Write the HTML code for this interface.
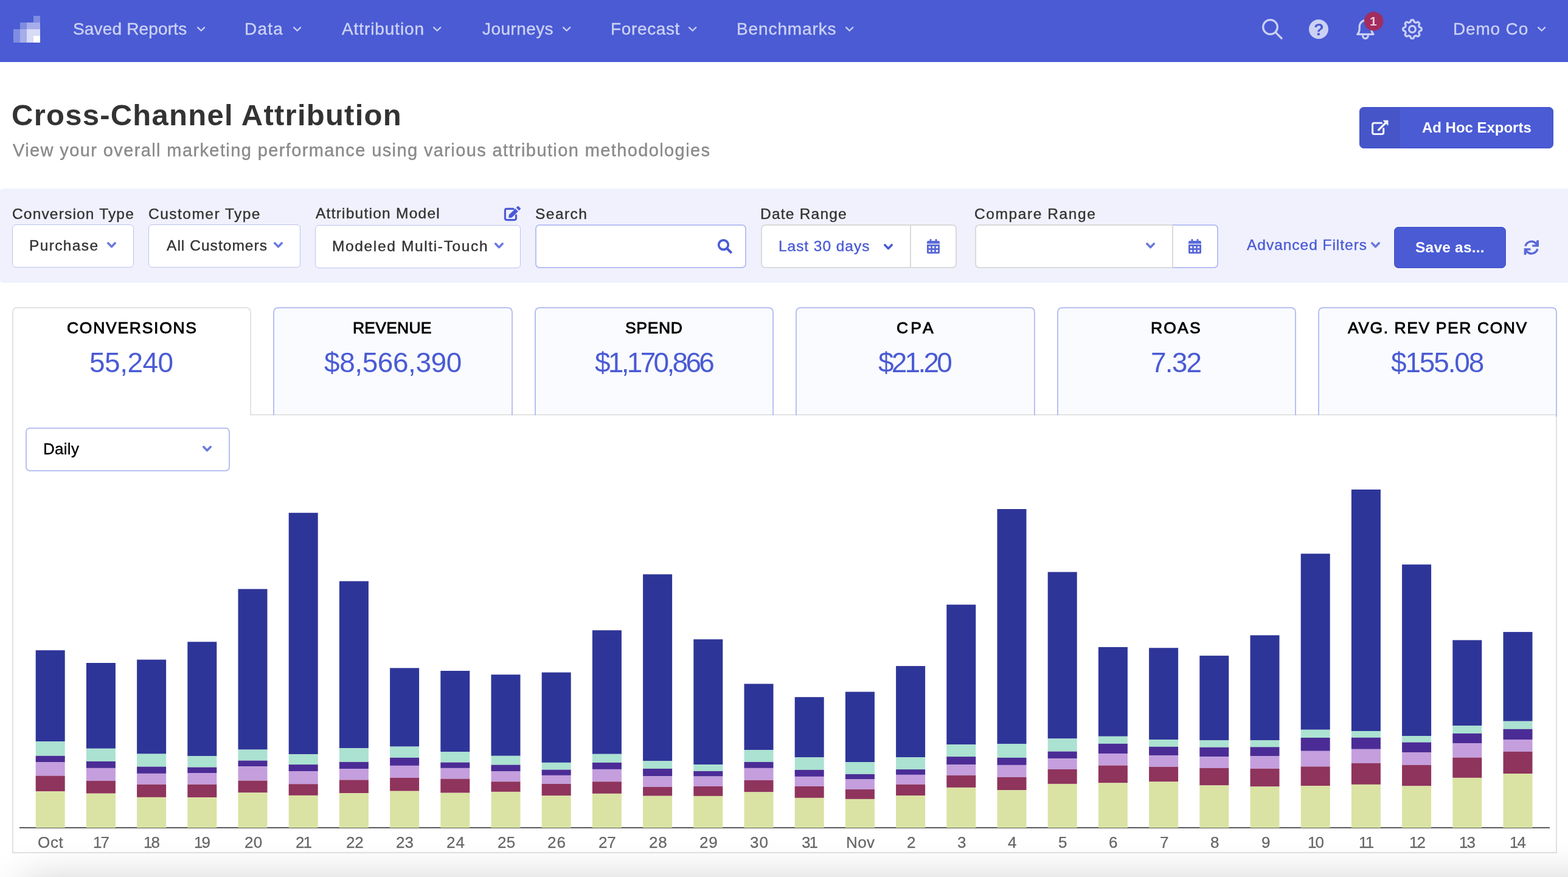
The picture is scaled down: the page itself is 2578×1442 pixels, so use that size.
<!DOCTYPE html>
<html lang="en">
<head>
<meta charset="utf-8">
<title>Cross-Channel Attribution</title>
<style>
html,body{margin:0;padding:0;background:#fff;overflow:hidden}
body{width:2578px;height:1442px;position:relative;overflow:hidden;font-family:"Liberation Sans", sans-serif}
.a{position:absolute;display:block}
.t{position:absolute;white-space:pre;font-weight:400;will-change:transform}
.box{position:absolute;box-sizing:border-box;background:#fff}
nav{position:absolute;left:0;top:0;width:2578px;height:102px;background:#4a5bd4}
.filters{position:absolute;left:0;top:310px;width:2578px;height:155px;background:#f0f1fd;border-radius:5px 0 0 5px}
.card{position:absolute;box-sizing:border-box;top:505px;height:178px;border:2px solid #b8c0f3;border-bottom:none;border-radius:8px 8px 0 0;background:#fafbfe;box-shadow:inset 0 -2px 0 #e2e2e2}
.card.on{background:#fff;border-color:#e2e2e2;box-shadow:none}
.panel{position:absolute;box-sizing:border-box;left:20px;top:681px;width:2540px;height:722px;border:2px solid #e2e2e2;background:#fff;border-radius:0 4px 0 0}
.shade{position:absolute;left:38px;top:1452px;width:2700px;height:60px;background:#ccc;box-shadow:0 0 70px 0 rgba(0,0,0,0.23);pointer-events:none;z-index:5}

</style>
</head>
<body>
<nav>
<svg class="a" style="left:22px;top:26px" width="44" height="44" viewBox="0 0 44 44" shape-rendering="crispEdges"><rect x="33" y="0" width="11" height="11" fill="#fff" fill-opacity="0.3"/><rect x="11" y="11" width="11" height="11" fill="#fff" fill-opacity="0.3"/><rect x="22" y="11" width="11" height="11" fill="#fff" fill-opacity="0.5"/><rect x="33" y="11" width="11" height="11" fill="#fff" fill-opacity="0.5"/><rect x="0" y="22" width="11" height="11" fill="#fff" fill-opacity="0.3"/><rect x="11" y="22" width="11" height="11" fill="#fff" fill-opacity="0.5"/><rect x="22" y="22" width="11" height="11" fill="#fff" fill-opacity="0.78"/><rect x="33" y="22" width="11" height="11" fill="#fff" fill-opacity="0.78"/><rect x="0" y="33" width="11" height="11" fill="#fff" fill-opacity="0.3"/><rect x="11" y="33" width="11" height="11" fill="#fff" fill-opacity="0.5"/><rect x="22" y="33" width="11" height="11" fill="#fff" fill-opacity="0.78"/><rect x="33" y="33" width="11" height="11" fill="#fff" fill-opacity="1"/></svg>
<a class="t" style="left:120px;top:34px;font-size:28px;line-height:28px;-webkit-text-stroke:0.4px #ccd1f4;letter-spacing:0.17px;color:#ccd1f4">Saved Reports</a>
<svg class="a" style="left:323.9px;top:44.2px" width="13.4" height="8" viewBox="0 0 13.4 8"><polyline points="1.15,1.15 6.70,6.50 12.25,1.15" fill="none" stroke="#ccd1f4" stroke-width="2.3" stroke-linecap="round" stroke-linejoin="round"/></svg>
<a class="t" style="left:401.8px;top:34px;font-size:28px;line-height:28px;-webkit-text-stroke:0.4px #ccd1f4;letter-spacing:1.25px;color:#ccd1f4">Data</a>
<svg class="a" style="left:481.9px;top:44.2px" width="13.4" height="8" viewBox="0 0 13.4 8"><polyline points="1.15,1.15 6.70,6.50 12.25,1.15" fill="none" stroke="#ccd1f4" stroke-width="2.3" stroke-linecap="round" stroke-linejoin="round"/></svg>
<a class="t" style="left:562px;top:34px;font-size:28px;line-height:28px;-webkit-text-stroke:0.4px #ccd1f4;letter-spacing:0.9px;color:#ccd1f4">Attribution</a>
<svg class="a" style="left:712.4px;top:44.2px" width="13.4" height="8" viewBox="0 0 13.4 8"><polyline points="1.15,1.15 6.70,6.50 12.25,1.15" fill="none" stroke="#ccd1f4" stroke-width="2.3" stroke-linecap="round" stroke-linejoin="round"/></svg>
<a class="t" style="left:793px;top:34px;font-size:28px;line-height:28px;-webkit-text-stroke:0.4px #ccd1f4;letter-spacing:0.43px;color:#ccd1f4">Journeys</a>
<svg class="a" style="left:925.4px;top:44.2px" width="13.4" height="8" viewBox="0 0 13.4 8"><polyline points="1.15,1.15 6.70,6.50 12.25,1.15" fill="none" stroke="#ccd1f4" stroke-width="2.3" stroke-linecap="round" stroke-linejoin="round"/></svg>
<a class="t" style="left:1003.5px;top:34px;font-size:28px;line-height:28px;-webkit-text-stroke:0.4px #ccd1f4;letter-spacing:0.64px;color:#ccd1f4">Forecast</a>
<svg class="a" style="left:1132.4px;top:44.2px" width="13.4" height="8" viewBox="0 0 13.4 8"><polyline points="1.15,1.15 6.70,6.50 12.25,1.15" fill="none" stroke="#ccd1f4" stroke-width="2.3" stroke-linecap="round" stroke-linejoin="round"/></svg>
<a class="t" style="left:1211px;top:34px;font-size:28px;line-height:28px;-webkit-text-stroke:0.4px #ccd1f4;letter-spacing:0.89px;color:#ccd1f4">Benchmarks</a>
<svg class="a" style="left:1390.4px;top:44.2px" width="13.4" height="8" viewBox="0 0 13.4 8"><polyline points="1.15,1.15 6.70,6.50 12.25,1.15" fill="none" stroke="#ccd1f4" stroke-width="2.3" stroke-linecap="round" stroke-linejoin="round"/></svg>
<svg class="a" style="left:2070px;top:26px" width="44" height="44" viewBox="2070 26 44 44" fill="none" stroke="#ccd1f4" stroke-width="3.3" stroke-linecap="round"><circle cx="2088.5" cy="44.5" r="11.8"/><line x1="2097.2" y1="53.2" x2="2107" y2="63"/></svg>
<svg class="a" style="left:2150px;top:30px" width="36" height="36" viewBox="2150 30 36 36"><circle cx="2168" cy="48" r="16" fill="#ccd1f4"/></svg>
<span class="t" style="left:2159.7px;top:35px;font-size:27.5px;line-height:27.5px;font-weight:700;color:#4a5bd4">?</span>
<svg class="a" style="left:2226px;top:28px" width="40" height="40" viewBox="2226 28 40 40" fill="none" stroke="#ccd1f4" stroke-width="3.2" stroke-linejoin="round" stroke-linecap="round"><path d="M2231.7 56.3 H2258.1 C2255.6 53.6 2254.8 51.5 2254.8 47.5 V44 C2254.8 38 2250.6 33.7 2245 33.7 C2239.4 33.7 2235.2 38 2235.2 44 V47.5 C2235.2 51.5 2234.3 53.6 2231.7 56.3 Z"/><path d="M2240.6 59 A4.3 4.3 0 0 0 2249.2 59"/></svg>
<svg class="a" style="left:2242px;top:18px" width="34" height="34" viewBox="2242 18 34 34"><circle cx="2258.6" cy="34.9" r="15.7" fill="#a22d5f"/></svg>
<span class="t" style="left:2252.1px;top:24px;font-size:21px;line-height:21px;font-weight:700;color:#eecbdb">1</span>
<svg class="a" style="left:2302px;top:28px" width="40" height="40" viewBox="2302 28 40 40" fill="none" stroke="#ccd1f4" stroke-width="3.2" stroke-linejoin="round"><path d="M2337.25 48.00 L2337.22 49.00 L2336.88 49.96 L2335.39 50.66 L2333.87 51.18 L2333.41 51.87 L2333.13 52.61 L2332.81 53.33 L2332.64 54.14 L2333.35 55.58 L2333.91 57.14 L2333.47 58.06 L2332.78 58.78 L2332.06 59.47 L2331.14 59.91 L2329.58 59.35 L2328.14 58.64 L2327.33 58.81 L2326.61 59.13 L2325.87 59.41 L2325.18 59.87 L2324.66 61.39 L2323.96 62.88 L2323.00 63.22 L2322.00 63.25 L2321.00 63.22 L2320.04 62.88 L2319.34 61.39 L2318.82 59.87 L2318.13 59.41 L2317.39 59.13 L2316.67 58.81 L2315.86 58.64 L2314.42 59.35 L2312.86 59.91 L2311.94 59.47 L2311.22 58.78 L2310.53 58.06 L2310.09 57.14 L2310.65 55.58 L2311.36 54.14 L2311.19 53.33 L2310.87 52.61 L2310.59 51.87 L2310.13 51.18 L2308.61 50.66 L2307.12 49.96 L2306.78 49.00 L2306.75 48.00 L2306.78 47.00 L2307.12 46.04 L2308.61 45.34 L2310.13 44.82 L2310.59 44.13 L2310.87 43.39 L2311.19 42.67 L2311.36 41.86 L2310.65 40.42 L2310.09 38.86 L2310.53 37.94 L2311.22 37.22 L2311.94 36.53 L2312.86 36.09 L2314.42 36.65 L2315.86 37.36 L2316.67 37.19 L2317.39 36.87 L2318.13 36.59 L2318.82 36.13 L2319.34 34.61 L2320.04 33.12 L2321.00 32.78 L2322.00 32.75 L2323.00 32.78 L2323.96 33.12 L2324.66 34.61 L2325.18 36.13 L2325.87 36.59 L2326.61 36.87 L2327.33 37.19 L2328.14 37.36 L2329.58 36.65 L2331.14 36.09 L2332.06 36.53 L2332.78 37.22 L2333.47 37.94 L2333.91 38.86 L2333.35 40.42 L2332.64 41.85 L2332.81 42.67 L2333.13 43.39 L2333.41 44.13 L2333.87 44.82 L2335.39 45.34 L2336.88 46.04 L2337.22 47.00 Z"/><circle cx="2322" cy="48" r="5.4"/></svg>
<a class="t" style="left:2389px;top:34px;font-size:28px;line-height:28px;-webkit-text-stroke:0.4px #ccd1f4;letter-spacing:0.83px;color:#ccd1f4">Demo Co</a>
<svg class="a" style="left:2527.6px;top:44.2px" width="13.4" height="8" viewBox="0 0 13.4 8"><polyline points="1.15,1.15 6.70,6.50 12.25,1.15" fill="none" stroke="#ccd1f4" stroke-width="2.3" stroke-linecap="round" stroke-linejoin="round"/></svg>
</nav>
<header>
<h1 style="margin:0"><span class="t" style="left:19px;top:165px;font-size:49px;line-height:49px;font-weight:700;letter-spacing:1.25px;color:#333333">Cross-Channel Attribution</span></h1>
<p style="margin:0"><span class="t" style="left:21px;top:233px;font-size:29px;line-height:29px;-webkit-text-stroke:0.4px #8a8a8a;letter-spacing:1.39px;color:#8a8a8a">View your overall marketing performance using various attribution methodologies</span></p>
<div class="a" style="left:2235px;top:176px;width:319px;height:68px;box-sizing:border-box;border:1px solid #3f4fcc;border-radius:7px;background:#4a5bd4;overflow:hidden"><div class="a" style="left:-1px;top:-1px;width:67px;height:68px;background:#4656c9"></div></div>
<svg class="a" style="left:2250px;top:192px" width="38" height="36" viewBox="2250 192 38 36" fill="none" stroke="#f1f2fc" stroke-width="3.1" stroke-linecap="round" stroke-linejoin="round"><path d="M2271.6 202.2 H2259.4 Q2256.6 202.2 2256.6 205 V217.7 Q2256.6 220.5 2259.4 220.5 H2271.9 Q2274.7 220.5 2274.7 217.7 V211.6"/><line x1="2265.6" y1="214.6" x2="2278.5" y2="201.7" stroke-width="3.4" stroke-linecap="butt"/><path d="M2274.6 198.3 H2281.9 V205.6 Z" fill="#f1f2fc" stroke-width="1.2"/></svg>
<span class="t" style="left:2338.4px;top:198px;font-size:24px;line-height:24px;font-weight:700;letter-spacing:-0.02px;color:#ffffff">Ad Hoc Exports</span>
</header>
<section class="filters"></section>
<label class="t" style="left:19.6px;top:340px;font-size:24.5px;line-height:24.5px;-webkit-text-stroke:0.4px #333333;letter-spacing:1.17px;color:#333333">Conversion Type</label>
<label class="t" style="left:243.6px;top:340px;font-size:24.5px;line-height:24.5px;-webkit-text-stroke:0.4px #333333;letter-spacing:1.48px;color:#333333">Customer Type</label>
<label class="t" style="left:519.2px;top:339px;font-size:24.5px;line-height:24.5px;-webkit-text-stroke:0.4px #333333;letter-spacing:1.24px;color:#333333">Attribution Model</label>
<label class="t" style="left:880.4px;top:340px;font-size:24.5px;line-height:24.5px;-webkit-text-stroke:0.4px #333333;letter-spacing:1.46px;color:#333333">Search</label>
<label class="t" style="left:1249.6px;top:340px;font-size:24.5px;line-height:24.5px;-webkit-text-stroke:0.4px #333333;letter-spacing:1.22px;color:#333333">Date Range</label>
<label class="t" style="left:1602.4px;top:340px;font-size:24.5px;line-height:24.5px;-webkit-text-stroke:0.4px #333333;letter-spacing:1.59px;color:#333333">Compare Range</label>
<div class="box" style="left:20px;top:369px;width:200px;height:71px;border:1px solid #bcc3ef;border-radius:6px"></div>
<div class="box" style="left:244px;top:369px;width:250px;height:71px;border:1px solid #bcc3ef;border-radius:6px"></div>
<div class="box" style="left:518px;top:370px;width:338px;height:71px;border:1px solid #bcc3ef;border-radius:6px"></div>
<div class="box" style="left:880px;top:369px;width:347px;height:72px;border:2px solid #b8c0f3;border-radius:7px"></div>
<div class="box" style="left:1251px;top:369px;width:322px;height:72px;border:2px solid #dadada;border-radius:7px"></div>
<div class="a" style="left:1496px;top:371px;width:2px;height:68px;background:#dadada"></div>
<div class="box" style="left:1603px;top:369px;width:400px;height:72px;border:2px solid #dadada;border-radius:7px"></div>
<div class="box" style="left:1927px;top:369px;width:76px;height:72px;border:2px solid #b8c0f3;border-left:2px solid #dadada;border-radius:0 7px 7px 0"></div>
<span class="t" style="left:48px;top:392px;font-size:24.5px;line-height:24.5px;-webkit-text-stroke:0.4px #333333;letter-spacing:1.36px;color:#333333">Purchase</span>
<span class="t" style="left:273.5px;top:392px;font-size:24.5px;line-height:24.5px;-webkit-text-stroke:0.4px #333333;letter-spacing:1.04px;color:#333333">All Customers</span>
<span class="t" style="left:545.6px;top:393px;font-size:24.5px;line-height:24.5px;-webkit-text-stroke:0.4px #333333;letter-spacing:1.64px;color:#333333">Modeled Multi-Touch</span>
<span class="t" style="left:1279.8px;top:393px;font-size:24.5px;line-height:24.5px;-webkit-text-stroke:0.4px #4a5bd4;letter-spacing:0.95px;color:#4a5bd4">Last 30 days</span>
<svg class="a" style="left:176px;top:398.3px" width="15" height="10" viewBox="0 0 15 10"><polyline points="1.80,1.80 7.50,7.66 13.20,1.80" fill="none" stroke="#6b79df" stroke-width="3.6" stroke-linecap="round" stroke-linejoin="round"/></svg>
<svg class="a" style="left:450px;top:398.3px" width="15" height="10" viewBox="0 0 15 10"><polyline points="1.80,1.80 7.50,7.66 13.20,1.80" fill="none" stroke="#6b79df" stroke-width="3.6" stroke-linecap="round" stroke-linejoin="round"/></svg>
<svg class="a" style="left:812.5px;top:399.3px" width="15" height="10" viewBox="0 0 15 10"><polyline points="1.80,1.80 7.50,7.66 13.20,1.80" fill="none" stroke="#6b79df" stroke-width="3.6" stroke-linecap="round" stroke-linejoin="round"/></svg>
<svg class="a" style="left:1453.2px;top:401px" width="15" height="10" viewBox="0 0 15 10"><polyline points="1.80,1.80 7.50,7.66 13.20,1.80" fill="none" stroke="#4a5bd4" stroke-width="3.6" stroke-linecap="round" stroke-linejoin="round"/></svg>
<svg class="a" style="left:1883.7px;top:399.2px" width="15" height="10" viewBox="0 0 15 10"><polyline points="1.80,1.80 7.50,7.66 13.20,1.80" fill="none" stroke="#6b79df" stroke-width="3.6" stroke-linecap="round" stroke-linejoin="round"/></svg>
<svg class="a" style="left:826px;top:336px" width="34" height="30" viewBox="826 336 34 30"><path d="M844.2 343.4 H833.2 Q830.4 343.4 830.4 346.2 V358.8 Q830.4 361.6 833.2 361.6 H845.7 Q848.5 361.6 848.5 358.8 V353.8" fill="none" stroke="#4a5bd4" stroke-width="3.1" stroke-linecap="round"/><path d="M847.3 342.9 L851.9 347.4 L841.6 357.7 L837 358.3 Q836.1 358.4 836.2 357.5 L836.9 352.9 Z" fill="#4a5bd4"/><path d="M848.7 341.4 L850.8 339.3 Q851.7 338.5 852.6 339.3 L855.6 342.3 Q856.4 343.2 855.6 344.1 L853.4 346.2 Z" fill="#4a5bd4"/></svg>
<svg class="a" style="left:1176px;top:390px" width="30" height="30" viewBox="1176 390 30 30" fill="none" stroke="#4a5bd4"><circle cx="1189.45" cy="402.65" r="7.8" stroke-width="3.7"/><line x1="1196" y1="409.2" x2="1201.6" y2="414.8" stroke-width="4.2" stroke-linecap="round"/></svg>
<svg class="a" style="left:1524px;top:393px" width="21" height="24.2" viewBox="0 0 21 24.2"><rect x="4.5" y="0" width="2.9" height="4.5" rx="0.9" fill="#5a69d8"/><rect x="13.6" y="0" width="2.9" height="4.5" rx="0.9" fill="#5a69d8"/><path d="M0 7.7 V5.3 Q0 3 2.3 3 H18.7 Q21 3 21 5.3 V7.7 Z" fill="#5a69d8"/><path d="M0 9.1 H21 V21.9 Q21 24.2 18.7 24.2 H2.3 Q0 24.2 0 21.9 Z" fill="#5a69d8"/><rect x="2.9" y="11.9" width="3.2" height="3.2" fill="#fff"/><rect x="2.9" y="18.0" width="3.2" height="3.2" fill="#fff"/><rect x="8.9" y="11.9" width="3.2" height="3.2" fill="#fff"/><rect x="8.9" y="18.0" width="3.2" height="3.2" fill="#fff"/><rect x="14.9" y="11.9" width="3.2" height="3.2" fill="#fff"/><rect x="14.9" y="18.0" width="3.2" height="3.2" fill="#fff"/></svg>
<svg class="a" style="left:1954px;top:393px" width="21" height="24.2" viewBox="0 0 21 24.2"><rect x="4.5" y="0" width="2.9" height="4.5" rx="0.9" fill="#5a69d8"/><rect x="13.6" y="0" width="2.9" height="4.5" rx="0.9" fill="#5a69d8"/><path d="M0 7.7 V5.3 Q0 3 2.3 3 H18.7 Q21 3 21 5.3 V7.7 Z" fill="#5a69d8"/><path d="M0 9.1 H21 V21.9 Q21 24.2 18.7 24.2 H2.3 Q0 24.2 0 21.9 Z" fill="#5a69d8"/><rect x="2.9" y="11.9" width="3.2" height="3.2" fill="#fff"/><rect x="2.9" y="18.0" width="3.2" height="3.2" fill="#fff"/><rect x="8.9" y="11.9" width="3.2" height="3.2" fill="#fff"/><rect x="8.9" y="18.0" width="3.2" height="3.2" fill="#fff"/><rect x="14.9" y="11.9" width="3.2" height="3.2" fill="#fff"/><rect x="14.9" y="18.0" width="3.2" height="3.2" fill="#fff"/></svg>
<span class="t" style="left:2049.6px;top:391px;font-size:24.5px;line-height:24.5px;-webkit-text-stroke:0.4px #4a5bd4;letter-spacing:0.97px;color:#4a5bd4">Advanced Filters</span>
<svg class="a" style="left:2254.4px;top:398.2px" width="15" height="10" viewBox="0 0 15 10"><polyline points="1.80,1.80 7.50,7.66 13.20,1.80" fill="none" stroke="#6b79df" stroke-width="3.6" stroke-linecap="round" stroke-linejoin="round"/></svg>
<div class="a" style="left:2292px;top:373px;width:184px;height:68px;box-sizing:border-box;border:1px solid #3f4fcc;border-radius:7px;background:#4a5bd4;box-shadow:0 0 0 1px rgba(255,255,255,0.85)"></div>
<span class="t" style="left:2327.2px;top:395px;font-size:24.5px;line-height:24.5px;font-weight:700;letter-spacing:0.21px;color:#ffffff">Save as...</span>
<svg class="a" style="left:2502px;top:391px" width="32" height="32" viewBox="2502 391 32 32"><path d="M2507.9 404.8 A10.3 10.3 0 0 1 2525.6 400.6" fill="none" stroke="#5a69d8" stroke-width="3.4"/><path d="M2526.6 395 H2530 V405.7 H2519.2 V402.6 L2524.5 402.3 Z" fill="#5a69d8"/><path d="M2527.8 409.2 A10.3 10.3 0 0 1 2510.1 413.4" fill="none" stroke="#5a69d8" stroke-width="3.4"/><path d="M2509.1 419 H2505.7 V408.3 H2516.5 V411.4 L2511.2 411.7 Z" fill="#5a69d8"/></svg>
<main>
<div class="panel"></div>
<div class="card on" style="left:20px;width:393px"></div>
<div class="card" style="left:449px;width:394px"></div>
<div class="card" style="left:879px;width:393px"></div>
<div class="card" style="left:1308px;width:394px"></div>
<div class="card" style="left:1738px;width:393px"></div>
<div class="card" style="left:2167px;width:393px"></div>
<div class="a" style="left:2558px;top:683px;width:2px;height:2px;background:#b8c0f3"></div>
<strong class="t" style="left:109.9px;top:526px;font-size:26.5px;line-height:26.5px;-webkit-text-stroke:0.9px #000000;letter-spacing:1.72px;color:#000000">CONVERSIONS</strong>
<span class="t" style="left:147.2px;top:573px;font-size:46px;line-height:46px;letter-spacing:-0.5px;color:#4a5bd4">55,240</span>
<strong class="t" style="left:580.2px;top:526px;font-size:26.5px;line-height:26.5px;-webkit-text-stroke:0.9px #000000;letter-spacing:0.23px;color:#000000">REVENUE</strong>
<span class="t" style="left:532.9px;top:573px;font-size:46px;line-height:46px;letter-spacing:-0.44px;color:#4a5bd4">$8,566,390</span>
<strong class="t" style="left:1028.0px;top:526px;font-size:26.5px;line-height:26.5px;-webkit-text-stroke:0.9px #000000;letter-spacing:0.65px;color:#000000">SPEND</strong>
<span class="t" style="left:977.5px;top:573px;font-size:46px;line-height:46px;letter-spacing:-3.71px;color:#4a5bd4">$1,170,866</span>
<strong class="t" style="left:1473.6px;top:526px;font-size:26.5px;line-height:26.5px;-webkit-text-stroke:0.9px #000000;letter-spacing:4.05px;color:#000000">CPA</strong>
<span class="t" style="left:1444.1px;top:573px;font-size:46px;line-height:46px;letter-spacing:-3.78px;color:#4a5bd4">$21.20</span>
<strong class="t" style="left:1892.4px;top:526px;font-size:26.5px;line-height:26.5px;-webkit-text-stroke:0.9px #000000;letter-spacing:2.17px;color:#000000">ROAS</strong>
<span class="t" style="left:1892.4px;top:573px;font-size:46px;line-height:46px;letter-spacing:-1.83px;color:#4a5bd4">7.32</span>
<strong class="t" style="left:2216.4px;top:526px;font-size:26.5px;line-height:26.5px;-webkit-text-stroke:0.9px #000000;letter-spacing:1.58px;color:#000000">AVG. REV PER CONV</strong>
<span class="t" style="left:2287.4px;top:573px;font-size:46px;line-height:46px;letter-spacing:-2.15px;color:#4a5bd4">$155.08</span>
<div class="box" style="left:42px;top:703px;width:336px;height:72px;border:2px solid #b8c0f3;border-radius:7px;z-index:3"></div>
<span class="t"  style="z-index:4;left:70.8px;top:725px;font-size:26px;line-height:26px;-webkit-text-stroke:0.4px #000000;letter-spacing:0.28px;color:#000000">Daily</span>
<svg class="a" style="z-index:4;left:333px;top:733px" width="15" height="10" viewBox="0 0 15 10"><polyline points="1.80,1.80 7.50,7.66 13.20,1.80" fill="none" stroke="#6b79df" stroke-width="3.6" stroke-linecap="round" stroke-linejoin="round"/></svg>
<svg class="a" style="left:0;top:790px;z-index:3" width="2578" height="580" viewBox="0 790 2578 580" shape-rendering="crispEdges">
<rect x="32" y="1360" width="2516" height="2" fill="#585858"/>
<rect x="58.7" y="1069.2" width="48" height="150.1" fill="#2e3598" shape-rendering="geometricPrecision"/>
<rect x="58.7" y="1219.3" width="48" height="23.5" fill="#abe2d1" shape-rendering="geometricPrecision"/>
<rect x="58.7" y="1242.8" width="48" height="10.3" fill="#4b2c96" shape-rendering="geometricPrecision"/>
<rect x="58.7" y="1253.1" width="48" height="22.5" fill="#c49edd" shape-rendering="geometricPrecision"/>
<rect x="58.7" y="1275.6" width="48" height="25.6" fill="#8f345c" shape-rendering="geometricPrecision"/>
<rect x="58.7" y="1301.2" width="48" height="59.8" fill="#dae3a3" shape-rendering="geometricPrecision"/>
<rect x="141.9" y="1090.0" width="48" height="140.8" fill="#2e3598" shape-rendering="geometricPrecision"/>
<rect x="141.9" y="1230.8" width="48" height="21.1" fill="#abe2d1" shape-rendering="geometricPrecision"/>
<rect x="141.9" y="1251.9" width="48" height="11.0" fill="#4b2c96" shape-rendering="geometricPrecision"/>
<rect x="141.9" y="1262.9" width="48" height="21.0" fill="#c49edd" shape-rendering="geometricPrecision"/>
<rect x="141.9" y="1283.9" width="48" height="20.8" fill="#8f345c" shape-rendering="geometricPrecision"/>
<rect x="141.9" y="1304.7" width="48" height="56.3" fill="#dae3a3" shape-rendering="geometricPrecision"/>
<rect x="225.1" y="1084.6" width="48" height="155.0" fill="#2e3598" shape-rendering="geometricPrecision"/>
<rect x="225.1" y="1239.6" width="48" height="21.0" fill="#abe2d1" shape-rendering="geometricPrecision"/>
<rect x="225.1" y="1260.6" width="48" height="11.3" fill="#4b2c96" shape-rendering="geometricPrecision"/>
<rect x="225.1" y="1271.9" width="48" height="18.0" fill="#c49edd" shape-rendering="geometricPrecision"/>
<rect x="225.1" y="1289.9" width="48" height="21.0" fill="#8f345c" shape-rendering="geometricPrecision"/>
<rect x="225.1" y="1310.9" width="48" height="50.1" fill="#dae3a3" shape-rendering="geometricPrecision"/>
<rect x="308.3" y="1055.3" width="48" height="187.8" fill="#2e3598" shape-rendering="geometricPrecision"/>
<rect x="308.3" y="1243.1" width="48" height="18.5" fill="#abe2d1" shape-rendering="geometricPrecision"/>
<rect x="308.3" y="1261.6" width="48" height="9.5" fill="#4b2c96" shape-rendering="geometricPrecision"/>
<rect x="308.3" y="1271.1" width="48" height="18.8" fill="#c49edd" shape-rendering="geometricPrecision"/>
<rect x="308.3" y="1289.9" width="48" height="21.3" fill="#8f345c" shape-rendering="geometricPrecision"/>
<rect x="308.3" y="1311.2" width="48" height="49.8" fill="#dae3a3" shape-rendering="geometricPrecision"/>
<rect x="391.5" y="968.5" width="48" height="264.1" fill="#2e3598" shape-rendering="geometricPrecision"/>
<rect x="391.5" y="1232.6" width="48" height="18.0" fill="#abe2d1" shape-rendering="geometricPrecision"/>
<rect x="391.5" y="1250.6" width="48" height="9.5" fill="#4b2c96" shape-rendering="geometricPrecision"/>
<rect x="391.5" y="1260.1" width="48" height="23.5" fill="#c49edd" shape-rendering="geometricPrecision"/>
<rect x="391.5" y="1283.6" width="48" height="19.8" fill="#8f345c" shape-rendering="geometricPrecision"/>
<rect x="391.5" y="1303.4" width="48" height="57.6" fill="#dae3a3" shape-rendering="geometricPrecision"/>
<rect x="474.7" y="843.2" width="48" height="396.9" fill="#2e3598" shape-rendering="geometricPrecision"/>
<rect x="474.7" y="1240.1" width="48" height="17.0" fill="#abe2d1" shape-rendering="geometricPrecision"/>
<rect x="474.7" y="1257.1" width="48" height="11.0" fill="#4b2c96" shape-rendering="geometricPrecision"/>
<rect x="474.7" y="1268.1" width="48" height="21.1" fill="#c49edd" shape-rendering="geometricPrecision"/>
<rect x="474.7" y="1289.2" width="48" height="18.7" fill="#8f345c" shape-rendering="geometricPrecision"/>
<rect x="474.7" y="1307.9" width="48" height="53.1" fill="#dae3a3" shape-rendering="geometricPrecision"/>
<rect x="557.9" y="955.6" width="48" height="274.5" fill="#2e3598" shape-rendering="geometricPrecision"/>
<rect x="557.9" y="1230.1" width="48" height="22.8" fill="#abe2d1" shape-rendering="geometricPrecision"/>
<rect x="557.9" y="1252.9" width="48" height="11.2" fill="#4b2c96" shape-rendering="geometricPrecision"/>
<rect x="557.9" y="1264.1" width="48" height="18.3" fill="#c49edd" shape-rendering="geometricPrecision"/>
<rect x="557.9" y="1282.4" width="48" height="21.8" fill="#8f345c" shape-rendering="geometricPrecision"/>
<rect x="557.9" y="1304.2" width="48" height="56.8" fill="#dae3a3" shape-rendering="geometricPrecision"/>
<rect x="641.1" y="1098.4" width="48" height="129.2" fill="#2e3598" shape-rendering="geometricPrecision"/>
<rect x="641.1" y="1227.6" width="48" height="18.2" fill="#abe2d1" shape-rendering="geometricPrecision"/>
<rect x="641.1" y="1245.8" width="48" height="13.1" fill="#4b2c96" shape-rendering="geometricPrecision"/>
<rect x="641.1" y="1258.9" width="48" height="20.0" fill="#c49edd" shape-rendering="geometricPrecision"/>
<rect x="641.1" y="1278.9" width="48" height="21.8" fill="#8f345c" shape-rendering="geometricPrecision"/>
<rect x="641.1" y="1300.7" width="48" height="60.3" fill="#dae3a3" shape-rendering="geometricPrecision"/>
<rect x="724.3" y="1103.0" width="48" height="133.3" fill="#2e3598" shape-rendering="geometricPrecision"/>
<rect x="724.3" y="1236.3" width="48" height="17.3" fill="#abe2d1" shape-rendering="geometricPrecision"/>
<rect x="724.3" y="1253.6" width="48" height="9.3" fill="#4b2c96" shape-rendering="geometricPrecision"/>
<rect x="724.3" y="1262.9" width="48" height="17.7" fill="#c49edd" shape-rendering="geometricPrecision"/>
<rect x="724.3" y="1280.6" width="48" height="23.1" fill="#8f345c" shape-rendering="geometricPrecision"/>
<rect x="724.3" y="1303.7" width="48" height="57.3" fill="#dae3a3" shape-rendering="geometricPrecision"/>
<rect x="807.5" y="1109.2" width="48" height="133.6" fill="#2e3598" shape-rendering="geometricPrecision"/>
<rect x="807.5" y="1242.8" width="48" height="14.8" fill="#abe2d1" shape-rendering="geometricPrecision"/>
<rect x="807.5" y="1257.6" width="48" height="10.8" fill="#4b2c96" shape-rendering="geometricPrecision"/>
<rect x="807.5" y="1268.4" width="48" height="16.8" fill="#c49edd" shape-rendering="geometricPrecision"/>
<rect x="807.5" y="1285.2" width="48" height="16.7" fill="#8f345c" shape-rendering="geometricPrecision"/>
<rect x="807.5" y="1301.9" width="48" height="59.1" fill="#dae3a3" shape-rendering="geometricPrecision"/>
<rect x="890.7" y="1105.6" width="48" height="148.3" fill="#2e3598" shape-rendering="geometricPrecision"/>
<rect x="890.7" y="1253.9" width="48" height="11.7" fill="#abe2d1" shape-rendering="geometricPrecision"/>
<rect x="890.7" y="1265.6" width="48" height="9.3" fill="#4b2c96" shape-rendering="geometricPrecision"/>
<rect x="890.7" y="1274.9" width="48" height="14.0" fill="#c49edd" shape-rendering="geometricPrecision"/>
<rect x="890.7" y="1288.9" width="48" height="19.5" fill="#8f345c" shape-rendering="geometricPrecision"/>
<rect x="890.7" y="1308.4" width="48" height="52.6" fill="#dae3a3" shape-rendering="geometricPrecision"/>
<rect x="973.9" y="1036.3" width="48" height="203.5" fill="#2e3598" shape-rendering="geometricPrecision"/>
<rect x="973.9" y="1239.8" width="48" height="14.1" fill="#abe2d1" shape-rendering="geometricPrecision"/>
<rect x="973.9" y="1253.9" width="48" height="11.0" fill="#4b2c96" shape-rendering="geometricPrecision"/>
<rect x="973.9" y="1264.9" width="48" height="20.3" fill="#c49edd" shape-rendering="geometricPrecision"/>
<rect x="973.9" y="1285.2" width="48" height="19.7" fill="#8f345c" shape-rendering="geometricPrecision"/>
<rect x="973.9" y="1304.9" width="48" height="56.1" fill="#dae3a3" shape-rendering="geometricPrecision"/>
<rect x="1057.1" y="944.3" width="48" height="307.0" fill="#2e3598" shape-rendering="geometricPrecision"/>
<rect x="1057.1" y="1251.3" width="48" height="12.6" fill="#abe2d1" shape-rendering="geometricPrecision"/>
<rect x="1057.1" y="1263.9" width="48" height="12.5" fill="#4b2c96" shape-rendering="geometricPrecision"/>
<rect x="1057.1" y="1276.4" width="48" height="17.5" fill="#c49edd" shape-rendering="geometricPrecision"/>
<rect x="1057.1" y="1293.9" width="48" height="14.8" fill="#8f345c" shape-rendering="geometricPrecision"/>
<rect x="1057.1" y="1308.7" width="48" height="52.3" fill="#dae3a3" shape-rendering="geometricPrecision"/>
<rect x="1140.3" y="1051.2" width="48" height="205.9" fill="#2e3598" shape-rendering="geometricPrecision"/>
<rect x="1140.3" y="1257.1" width="48" height="10.8" fill="#abe2d1" shape-rendering="geometricPrecision"/>
<rect x="1140.3" y="1267.9" width="48" height="8.7" fill="#4b2c96" shape-rendering="geometricPrecision"/>
<rect x="1140.3" y="1276.6" width="48" height="16.3" fill="#c49edd" shape-rendering="geometricPrecision"/>
<rect x="1140.3" y="1292.9" width="48" height="16.0" fill="#8f345c" shape-rendering="geometricPrecision"/>
<rect x="1140.3" y="1308.9" width="48" height="52.1" fill="#dae3a3" shape-rendering="geometricPrecision"/>
<rect x="1223.5" y="1124.4" width="48" height="108.7" fill="#2e3598" shape-rendering="geometricPrecision"/>
<rect x="1223.5" y="1233.1" width="48" height="19.8" fill="#abe2d1" shape-rendering="geometricPrecision"/>
<rect x="1223.5" y="1252.9" width="48" height="10.0" fill="#4b2c96" shape-rendering="geometricPrecision"/>
<rect x="1223.5" y="1262.9" width="48" height="20.0" fill="#c49edd" shape-rendering="geometricPrecision"/>
<rect x="1223.5" y="1282.9" width="48" height="19.5" fill="#8f345c" shape-rendering="geometricPrecision"/>
<rect x="1223.5" y="1302.4" width="48" height="58.6" fill="#dae3a3" shape-rendering="geometricPrecision"/>
<rect x="1306.7" y="1146.2" width="48" height="99.1" fill="#2e3598" shape-rendering="geometricPrecision"/>
<rect x="1306.7" y="1245.3" width="48" height="20.6" fill="#abe2d1" shape-rendering="geometricPrecision"/>
<rect x="1306.7" y="1265.9" width="48" height="11.0" fill="#4b2c96" shape-rendering="geometricPrecision"/>
<rect x="1306.7" y="1276.9" width="48" height="16.0" fill="#c49edd" shape-rendering="geometricPrecision"/>
<rect x="1306.7" y="1292.9" width="48" height="19.0" fill="#8f345c" shape-rendering="geometricPrecision"/>
<rect x="1306.7" y="1311.9" width="48" height="49.1" fill="#dae3a3" shape-rendering="geometricPrecision"/>
<rect x="1389.9" y="1137.5" width="48" height="115.6" fill="#2e3598" shape-rendering="geometricPrecision"/>
<rect x="1389.9" y="1253.1" width="48" height="19.8" fill="#abe2d1" shape-rendering="geometricPrecision"/>
<rect x="1389.9" y="1272.9" width="48" height="8.5" fill="#4b2c96" shape-rendering="geometricPrecision"/>
<rect x="1389.9" y="1281.4" width="48" height="16.5" fill="#c49edd" shape-rendering="geometricPrecision"/>
<rect x="1389.9" y="1297.9" width="48" height="16.0" fill="#8f345c" shape-rendering="geometricPrecision"/>
<rect x="1389.9" y="1313.9" width="48" height="47.1" fill="#dae3a3" shape-rendering="geometricPrecision"/>
<rect x="1473.1" y="1095.1" width="48" height="150.0" fill="#2e3598" shape-rendering="geometricPrecision"/>
<rect x="1473.1" y="1245.1" width="48" height="20.0" fill="#abe2d1" shape-rendering="geometricPrecision"/>
<rect x="1473.1" y="1265.1" width="48" height="8.8" fill="#4b2c96" shape-rendering="geometricPrecision"/>
<rect x="1473.1" y="1273.9" width="48" height="16.0" fill="#c49edd" shape-rendering="geometricPrecision"/>
<rect x="1473.1" y="1289.9" width="48" height="18.3" fill="#8f345c" shape-rendering="geometricPrecision"/>
<rect x="1473.1" y="1308.2" width="48" height="52.8" fill="#dae3a3" shape-rendering="geometricPrecision"/>
<rect x="1556.3" y="994.2" width="48" height="230.1" fill="#2e3598" shape-rendering="geometricPrecision"/>
<rect x="1556.3" y="1224.3" width="48" height="19.8" fill="#abe2d1" shape-rendering="geometricPrecision"/>
<rect x="1556.3" y="1244.1" width="48" height="13.3" fill="#4b2c96" shape-rendering="geometricPrecision"/>
<rect x="1556.3" y="1257.4" width="48" height="17.5" fill="#c49edd" shape-rendering="geometricPrecision"/>
<rect x="1556.3" y="1274.9" width="48" height="20.0" fill="#8f345c" shape-rendering="geometricPrecision"/>
<rect x="1556.3" y="1294.9" width="48" height="66.1" fill="#dae3a3" shape-rendering="geometricPrecision"/>
<rect x="1639.5" y="837.0" width="48" height="386.1" fill="#2e3598" shape-rendering="geometricPrecision"/>
<rect x="1639.5" y="1223.1" width="48" height="22.7" fill="#abe2d1" shape-rendering="geometricPrecision"/>
<rect x="1639.5" y="1245.8" width="48" height="12.1" fill="#4b2c96" shape-rendering="geometricPrecision"/>
<rect x="1639.5" y="1257.9" width="48" height="20.0" fill="#c49edd" shape-rendering="geometricPrecision"/>
<rect x="1639.5" y="1277.9" width="48" height="21.3" fill="#8f345c" shape-rendering="geometricPrecision"/>
<rect x="1639.5" y="1299.2" width="48" height="61.8" fill="#dae3a3" shape-rendering="geometricPrecision"/>
<rect x="1722.7" y="940.5" width="48" height="274.0" fill="#2e3598" shape-rendering="geometricPrecision"/>
<rect x="1722.7" y="1214.5" width="48" height="21.1" fill="#abe2d1" shape-rendering="geometricPrecision"/>
<rect x="1722.7" y="1235.6" width="48" height="11.7" fill="#4b2c96" shape-rendering="geometricPrecision"/>
<rect x="1722.7" y="1247.3" width="48" height="17.6" fill="#c49edd" shape-rendering="geometricPrecision"/>
<rect x="1722.7" y="1264.9" width="48" height="24.0" fill="#8f345c" shape-rendering="geometricPrecision"/>
<rect x="1722.7" y="1288.9" width="48" height="72.1" fill="#dae3a3" shape-rendering="geometricPrecision"/>
<rect x="1805.9" y="1064.0" width="48" height="146.8" fill="#2e3598" shape-rendering="geometricPrecision"/>
<rect x="1805.9" y="1210.8" width="48" height="12.0" fill="#abe2d1" shape-rendering="geometricPrecision"/>
<rect x="1805.9" y="1222.8" width="48" height="16.3" fill="#4b2c96" shape-rendering="geometricPrecision"/>
<rect x="1805.9" y="1239.1" width="48" height="19.5" fill="#c49edd" shape-rendering="geometricPrecision"/>
<rect x="1805.9" y="1258.6" width="48" height="28.8" fill="#8f345c" shape-rendering="geometricPrecision"/>
<rect x="1805.9" y="1287.4" width="48" height="73.6" fill="#dae3a3" shape-rendering="geometricPrecision"/>
<rect x="1889.1" y="1065.3" width="48" height="150.7" fill="#2e3598" shape-rendering="geometricPrecision"/>
<rect x="1889.1" y="1216.0" width="48" height="11.8" fill="#abe2d1" shape-rendering="geometricPrecision"/>
<rect x="1889.1" y="1227.8" width="48" height="14.5" fill="#4b2c96" shape-rendering="geometricPrecision"/>
<rect x="1889.1" y="1242.3" width="48" height="18.6" fill="#c49edd" shape-rendering="geometricPrecision"/>
<rect x="1889.1" y="1260.9" width="48" height="24.5" fill="#8f345c" shape-rendering="geometricPrecision"/>
<rect x="1889.1" y="1285.4" width="48" height="75.6" fill="#dae3a3" shape-rendering="geometricPrecision"/>
<rect x="1972.3" y="1078.1" width="48" height="139.2" fill="#2e3598" shape-rendering="geometricPrecision"/>
<rect x="1972.3" y="1217.3" width="48" height="11.5" fill="#abe2d1" shape-rendering="geometricPrecision"/>
<rect x="1972.3" y="1228.8" width="48" height="15.3" fill="#4b2c96" shape-rendering="geometricPrecision"/>
<rect x="1972.3" y="1244.1" width="48" height="18.8" fill="#c49edd" shape-rendering="geometricPrecision"/>
<rect x="1972.3" y="1262.9" width="48" height="28.5" fill="#8f345c" shape-rendering="geometricPrecision"/>
<rect x="1972.3" y="1291.4" width="48" height="69.6" fill="#dae3a3" shape-rendering="geometricPrecision"/>
<rect x="2055.5" y="1044.5" width="48" height="172.8" fill="#2e3598" shape-rendering="geometricPrecision"/>
<rect x="2055.5" y="1217.3" width="48" height="11.0" fill="#abe2d1" shape-rendering="geometricPrecision"/>
<rect x="2055.5" y="1228.3" width="48" height="14.8" fill="#4b2c96" shape-rendering="geometricPrecision"/>
<rect x="2055.5" y="1243.1" width="48" height="20.8" fill="#c49edd" shape-rendering="geometricPrecision"/>
<rect x="2055.5" y="1263.9" width="48" height="29.5" fill="#8f345c" shape-rendering="geometricPrecision"/>
<rect x="2055.5" y="1293.4" width="48" height="67.6" fill="#dae3a3" shape-rendering="geometricPrecision"/>
<rect x="2138.7" y="910.4" width="48" height="289.4" fill="#2e3598" shape-rendering="geometricPrecision"/>
<rect x="2138.7" y="1199.8" width="48" height="13.2" fill="#abe2d1" shape-rendering="geometricPrecision"/>
<rect x="2138.7" y="1213.0" width="48" height="21.8" fill="#4b2c96" shape-rendering="geometricPrecision"/>
<rect x="2138.7" y="1234.8" width="48" height="25.6" fill="#c49edd" shape-rendering="geometricPrecision"/>
<rect x="2138.7" y="1260.4" width="48" height="31.8" fill="#8f345c" shape-rendering="geometricPrecision"/>
<rect x="2138.7" y="1292.2" width="48" height="68.8" fill="#dae3a3" shape-rendering="geometricPrecision"/>
<rect x="2221.9" y="804.9" width="48" height="397.1" fill="#2e3598" shape-rendering="geometricPrecision"/>
<rect x="2221.9" y="1202.0" width="48" height="10.8" fill="#abe2d1" shape-rendering="geometricPrecision"/>
<rect x="2221.9" y="1212.8" width="48" height="19.0" fill="#4b2c96" shape-rendering="geometricPrecision"/>
<rect x="2221.9" y="1231.8" width="48" height="23.1" fill="#c49edd" shape-rendering="geometricPrecision"/>
<rect x="2221.9" y="1254.9" width="48" height="35.0" fill="#8f345c" shape-rendering="geometricPrecision"/>
<rect x="2221.9" y="1289.9" width="48" height="71.1" fill="#dae3a3" shape-rendering="geometricPrecision"/>
<rect x="2305.1" y="928.2" width="48" height="281.8" fill="#2e3598" shape-rendering="geometricPrecision"/>
<rect x="2305.1" y="1210.0" width="48" height="10.6" fill="#abe2d1" shape-rendering="geometricPrecision"/>
<rect x="2305.1" y="1220.6" width="48" height="16.5" fill="#4b2c96" shape-rendering="geometricPrecision"/>
<rect x="2305.1" y="1237.1" width="48" height="20.8" fill="#c49edd" shape-rendering="geometricPrecision"/>
<rect x="2305.1" y="1257.9" width="48" height="34.5" fill="#8f345c" shape-rendering="geometricPrecision"/>
<rect x="2305.1" y="1292.4" width="48" height="68.6" fill="#dae3a3" shape-rendering="geometricPrecision"/>
<rect x="2388.3" y="1052.5" width="48" height="140.8" fill="#2e3598" shape-rendering="geometricPrecision"/>
<rect x="2388.3" y="1193.3" width="48" height="12.7" fill="#abe2d1" shape-rendering="geometricPrecision"/>
<rect x="2388.3" y="1206.0" width="48" height="16.1" fill="#4b2c96" shape-rendering="geometricPrecision"/>
<rect x="2388.3" y="1222.1" width="48" height="23.5" fill="#c49edd" shape-rendering="geometricPrecision"/>
<rect x="2388.3" y="1245.6" width="48" height="33.3" fill="#8f345c" shape-rendering="geometricPrecision"/>
<rect x="2388.3" y="1278.9" width="48" height="82.1" fill="#dae3a3" shape-rendering="geometricPrecision"/>
<rect x="2471.5" y="1039.1" width="48" height="146.7" fill="#2e3598" shape-rendering="geometricPrecision"/>
<rect x="2471.5" y="1185.8" width="48" height="13.0" fill="#abe2d1" shape-rendering="geometricPrecision"/>
<rect x="2471.5" y="1198.8" width="48" height="17.2" fill="#4b2c96" shape-rendering="geometricPrecision"/>
<rect x="2471.5" y="1216.0" width="48" height="19.8" fill="#c49edd" shape-rendering="geometricPrecision"/>
<rect x="2471.5" y="1235.8" width="48" height="36.3" fill="#8f345c" shape-rendering="geometricPrecision"/>
<rect x="2471.5" y="1272.1" width="48" height="88.9" fill="#dae3a3" shape-rendering="geometricPrecision"/>
</svg>
<span class="t" style="z-index:4;left:61.7px;top:1372px;font-size:26px;line-height:26px;-webkit-text-stroke:0.25px #666666;letter-spacing:0.7px;color:#666666">Oct</span>
<span class="t" style="z-index:4;left:152.6px;top:1372px;font-size:26px;line-height:26px;-webkit-text-stroke:0.25px #666666;letter-spacing:-1.9px;color:#666666">17</span>
<span class="t" style="z-index:4;left:236.0px;top:1372px;font-size:26px;line-height:26px;-webkit-text-stroke:0.25px #666666;letter-spacing:-1.9px;color:#666666">18</span>
<span class="t" style="z-index:4;left:319.2px;top:1372px;font-size:26px;line-height:26px;-webkit-text-stroke:0.25px #666666;letter-spacing:-1.9px;color:#666666">19</span>
<span class="t" style="z-index:4;left:401.6px;top:1372px;font-size:26px;line-height:26px;-webkit-text-stroke:0.25px #666666;letter-spacing:0.4px;color:#666666">20</span>
<span class="t" style="z-index:4;left:485.9px;top:1372px;font-size:26px;line-height:26px;-webkit-text-stroke:0.25px #666666;letter-spacing:-1.9px;color:#666666">21</span>
<span class="t" style="z-index:4;left:568.5px;top:1372px;font-size:26px;line-height:26px;-webkit-text-stroke:0.25px #666666;letter-spacing:-0.3px;color:#666666">22</span>
<span class="t" style="z-index:4;left:651.3px;top:1372px;font-size:26px;line-height:26px;-webkit-text-stroke:0.25px #666666;letter-spacing:0.1px;color:#666666">23</span>
<span class="t" style="z-index:4;left:734.1px;top:1372px;font-size:26px;line-height:26px;-webkit-text-stroke:0.25px #666666;letter-spacing:1.0px;color:#666666">24</span>
<span class="t" style="z-index:4;left:817.6px;top:1372px;font-size:26px;line-height:26px;-webkit-text-stroke:0.25px #666666;letter-spacing:0.4px;color:#666666">25</span>
<span class="t" style="z-index:4;left:900.1px;top:1372px;font-size:26px;line-height:26px;-webkit-text-stroke:0.25px #666666;letter-spacing:1.0px;color:#666666">26</span>
<span class="t" style="z-index:4;left:984.2px;top:1372px;font-size:26px;line-height:26px;-webkit-text-stroke:0.25px #666666;letter-spacing:-0.3px;color:#666666">27</span>
<span class="t" style="z-index:4;left:1066.7px;top:1372px;font-size:26px;line-height:26px;-webkit-text-stroke:0.25px #666666;letter-spacing:0.7px;color:#666666">28</span>
<span class="t" style="z-index:4;left:1150.1px;top:1372px;font-size:26px;line-height:26px;-webkit-text-stroke:0.25px #666666;letter-spacing:0.7px;color:#666666">29</span>
<span class="t" style="z-index:4;left:1233.3px;top:1372px;font-size:26px;line-height:26px;-webkit-text-stroke:0.25px #666666;letter-spacing:1.0px;color:#666666">30</span>
<span class="t" style="z-index:4;left:1317.9px;top:1372px;font-size:26px;line-height:26px;-webkit-text-stroke:0.25px #666666;letter-spacing:-1.9px;color:#666666">31</span>
<span class="t" style="z-index:4;left:1390.5px;top:1372px;font-size:26px;line-height:26px;-webkit-text-stroke:0.25px #666666;letter-spacing:0.35px;color:#666666">Nov</span>
<span class="t" style="z-index:4;left:1491.0px;top:1372px;font-size:26px;line-height:26px;-webkit-text-stroke:0.25px #666666;color:#666666">2</span>
<span class="t" style="z-index:4;left:1573.6px;top:1372px;font-size:26px;line-height:26px;-webkit-text-stroke:0.25px #666666;color:#666666">3</span>
<span class="t" style="z-index:4;left:1657.3px;top:1372px;font-size:26px;line-height:26px;-webkit-text-stroke:0.25px #666666;color:#666666">4</span>
<span class="t" style="z-index:4;left:1739.9px;top:1372px;font-size:26px;line-height:26px;-webkit-text-stroke:0.25px #666666;color:#666666">5</span>
<span class="t" style="z-index:4;left:1823.2px;top:1372px;font-size:26px;line-height:26px;-webkit-text-stroke:0.25px #666666;color:#666666">6</span>
<span class="t" style="z-index:4;left:1906.8px;top:1372px;font-size:26px;line-height:26px;-webkit-text-stroke:0.25px #666666;color:#666666">7</span>
<span class="t" style="z-index:4;left:1989.6px;top:1372px;font-size:26px;line-height:26px;-webkit-text-stroke:0.25px #666666;color:#666666">8</span>
<span class="t" style="z-index:4;left:2073.6px;top:1372px;font-size:26px;line-height:26px;-webkit-text-stroke:0.25px #666666;color:#666666">9</span>
<span class="t" style="z-index:4;left:2149.7px;top:1372px;font-size:26px;line-height:26px;-webkit-text-stroke:0.25px #666666;letter-spacing:-1.9px;color:#666666">10</span>
<span class="t" style="z-index:4;left:2233.7px;top:1372px;font-size:26px;line-height:26px;-webkit-text-stroke:0.25px #666666;letter-spacing:-1.9px;color:#666666">11</span>
<span class="t" style="z-index:4;left:2316.5px;top:1372px;font-size:26px;line-height:26px;-webkit-text-stroke:0.25px #666666;letter-spacing:-1.9px;color:#666666">12</span>
<span class="t" style="z-index:4;left:2399.4px;top:1372px;font-size:26px;line-height:26px;-webkit-text-stroke:0.25px #666666;letter-spacing:-1.9px;color:#666666">13</span>
<span class="t" style="z-index:4;left:2482.4px;top:1372px;font-size:26px;line-height:26px;-webkit-text-stroke:0.25px #666666;letter-spacing:-1.9px;color:#666666">14</span>
</main>
<div class="shade"></div>
<script>(function(){var w=window.innerWidth||0;if(w>0&&Math.abs(w-2578)>2){var b=document.body;b.style.transformOrigin="0 0";b.style.transform="scale("+(w/2578)+")";}})();</script>
</body>
</html>
